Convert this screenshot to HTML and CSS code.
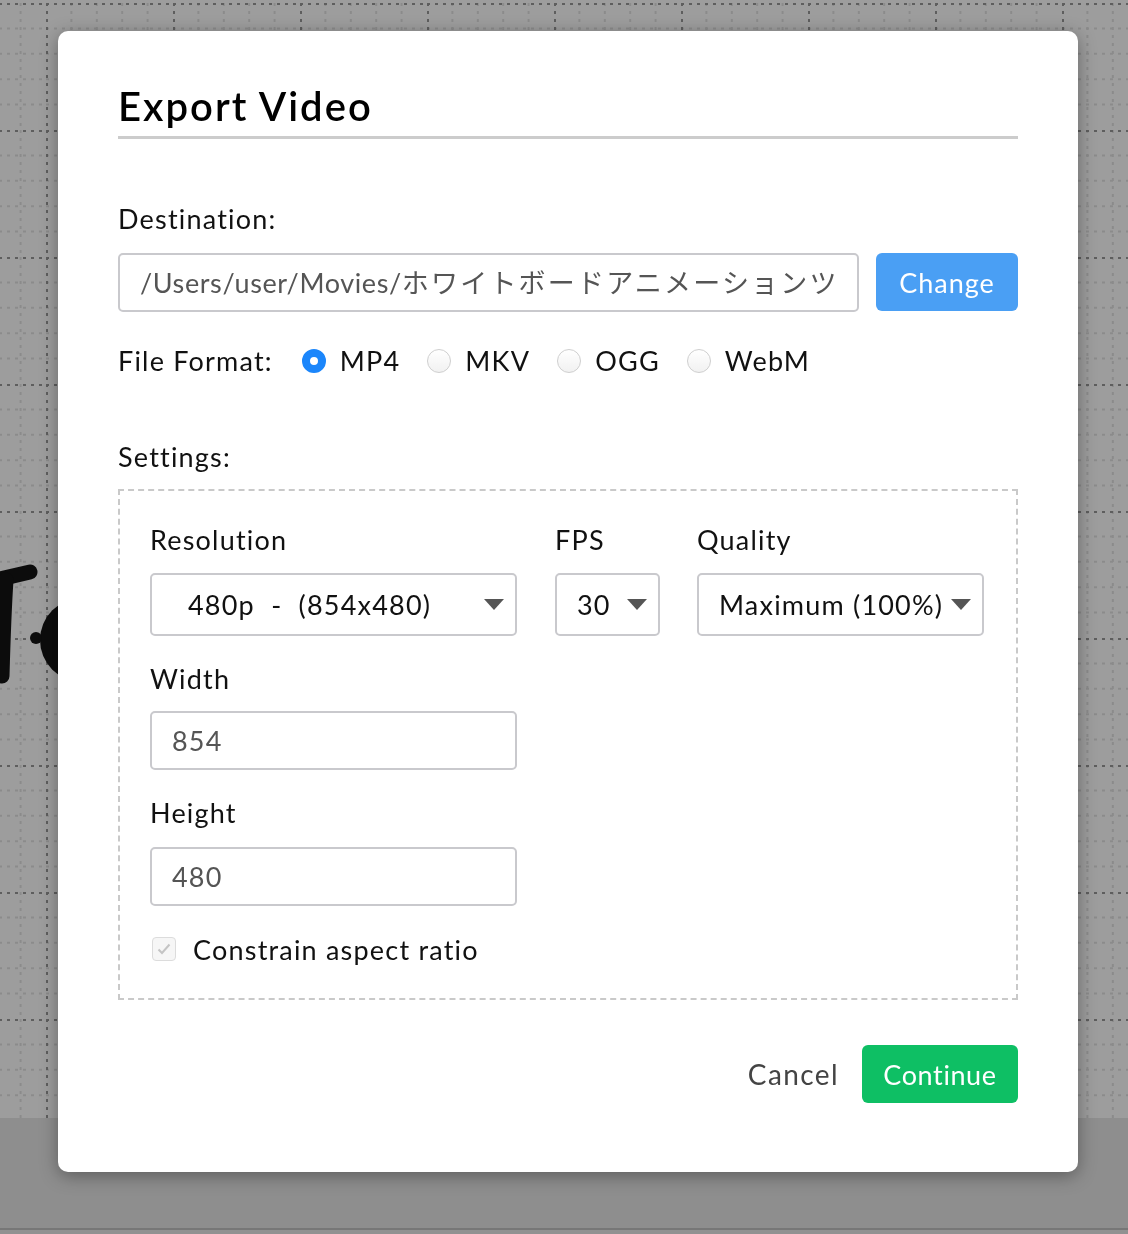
FILE: index.html
```html
<!DOCTYPE html>
<html>
<head>
<meta charset="utf-8">
<link rel="stylesheet" href="styles.css">
</head>
<body>
<div class="canvas">
  <svg class="grid" width="1128" height="1118" viewBox="0 0 1128 1118">
    <defs>
      <pattern id="g" width="127" height="127" patternUnits="userSpaceOnUse" x="46" y="3">
        <g stroke="#8b8b8b" stroke-width="2" stroke-dasharray="3 5">
          <line x1="25.4" y1="0" x2="25.4" y2="127"/>
          <line x1="50.8" y1="0" x2="50.8" y2="127"/>
          <line x1="76.2" y1="0" x2="76.2" y2="127"/>
          <line x1="101.6" y1="0" x2="101.6" y2="127"/>
          <line y1="25.4" x1="0" y2="25.4" x2="127"/>
          <line y1="50.8" x1="0" y2="50.8" x2="127"/>
          <line y1="76.2" x1="0" y2="76.2" x2="127"/>
          <line y1="101.6" x1="0" y2="101.6" x2="127"/>
        </g>
        <g stroke="#5e5e5e" stroke-width="2" stroke-dasharray="3 5">
          <line x1="1" y1="0" x2="1" y2="127"/>
          <line y1="1" x1="0" y2="1" x2="127"/>
        </g>
      </pattern>
    </defs>
    <rect width="1128" height="1118" fill="url(#g)"/>
    <g fill="none" stroke="#0c0c0c" stroke-linecap="round" stroke-width="15">
      <path d="M-4 580 L30 572"/>
      <path d="M6 580 C4 610 3 640 2 676"/>
    </g>
    <circle cx="82" cy="640" r="42" fill="#0c0c0c"/>
    <circle cx="36" cy="638" r="6" fill="#0c0c0c"/>
  </svg>
</div>
<div class="bottombar"></div>

<div class="modal">
  <h1 class="title">Export Video</h1>

  <div class="label dest-label">Destination:</div>
  <div class="dest-row">
    <div class="field path"><span class="path-text">/Users/user/Movies/<span class="jp">ホワイトボードアニメーションツール</span></span></div>
    <button class="btn btn-blue">Change</button>
  </div>

  <div class="format-row">
    <span class="label">File Format:</span>
    <label class="radio checked"><span class="dot"></span>MP4</label>
    <label class="radio"><span class="dot"></span>MKV</label>
    <label class="radio"><span class="dot"></span>OGG</label>
    <label class="radio"><span class="dot"></span>WebM</label>
  </div>

  <div class="label settings-label">Settings:</div>
  <div class="settings">
    <div class="cols">
      <div class="col col-res">
        <div class="label">Resolution</div>
        <div class="select res-select"><span class="val">480p&nbsp; - &nbsp;(854x480)</span><span class="caret"></span></div>
      </div>
      <div class="col col-fps">
        <div class="label">FPS</div>
        <div class="select"><span class="val">30</span><span class="caret"></span></div>
      </div>
      <div class="col col-q">
        <div class="label">Quality</div>
        <div class="select"><span class="val">Maximum (100%)</span><span class="caret"></span></div>
      </div>
    </div>

    <div class="label sub-label">Width</div>
    <div class="field num w-field">854</div>
    <div class="label sub-label">Height</div>
    <div class="field num h-field">480</div>

    <label class="check">
      <span class="box">
        <svg width="14" height="12" viewBox="0 0 14 12"><path d="M1.5 6.5 L5 10 L12.5 1.5" fill="none" stroke="#c4c4c4" stroke-width="2"/></svg>
      </span>
      Constrain aspect ratio
    </label>
  </div>

  <div class="actions">
    <button class="btn-text">Cancel</button>
    <button class="btn btn-green">Continue</button>
  </div>
</div>
</body>
</html>
```

FILE: styles.css
```css
html, body {
  margin: 0;
  padding: 0;
}
body {
  width: 1128px;
  height: 1234px;
  overflow: hidden;
  background: #919191;
  font-family: Lato, "Noto Sans CJK JP", sans-serif;
  color: #111;
  letter-spacing: 1.2px;
}
.canvas {
  height: 1118px;
  background: #9d9d9d;
  overflow: hidden;
}
.grid {
  display: block;
}
.bottombar {
  height: 110px;
  background: #8e8e8e;
  border-bottom: 2px solid #777;
}

.modal {
  position: fixed;
  left: 58px;
  top: 31px;
  width: 1020px;
  height: 1141px;
  box-sizing: border-box;
  padding: 51px 60px 0;
  background: #fff;
  border-radius: 10px;
  box-shadow: 0 4px 18px rgba(0, 0, 0, 0.35);
  display: flex;
  flex-direction: column;
  align-items: stretch;
}

.title {
  margin: 0;
  font-size: 40px;
  line-height: 48px;
  font-weight: 600;
  color: #000;
  padding-bottom: 6px;
  border-bottom: 3px solid #cccccc;
  letter-spacing: 2px;
}

.label {
  font-size: 27px;
  line-height: 32px;
  color: #111;
}
.dest-label { margin-top: 64px; }

.dest-row {
  margin-top: 18px;
  display: flex;
  gap: 17px;
  height: 59px;
}
.field {
  box-sizing: border-box;
  border: 2px solid #c9c9cd;
  border-radius: 5px;
  font-size: 27px;
  color: #555;
  display: flex;
  align-items: center;
  white-space: nowrap;
  overflow: hidden;
}
.path {
  width: 741px;
  padding: 0 20px;
  letter-spacing: 0.6px;
}
.path-text {
  display: block;
  width: 100%;
  overflow: hidden;
  white-space: nowrap;
  line-height: 55px;
}
.jp {
  letter-spacing: 2.2px;
}
.btn {
  border: none;
  border-radius: 6px;
  color: #fff;
  font-family: Lato, sans-serif;
  font-size: 27px;
  letter-spacing: 1px;
  cursor: pointer;
  padding: 0;
}
.btn-blue {
  width: 142px;
  height: 58px;
  background: #4a9ff4;
}

.format-row {
  margin-top: 33px;
  height: 32px;
  display: flex;
  align-items: center;
}
.format-row .label { margin-right: 29px; }
.radio {
  display: flex;
  align-items: center;
  font-size: 27px;
  line-height: 32px;
  margin-right: 27px;
}
.radio .dot {
  box-sizing: border-box;
  width: 24px;
  height: 24px;
  border-radius: 50%;
  border: 1px solid #cfcfcf;
  background: linear-gradient(#ffffff, #f1f1f1);
  margin-right: 14px;
}
.radio.checked .dot {
  border: 8px solid #1b86fb;
  background: #fff;
}

.settings-label { margin-top: 64px; }

.settings {
  margin-top: 16px;
  height: 511px;
  box-sizing: border-box;
  border: 2px dashed #c9c9c9;
  padding: 33px 31px 33px 30px;
}
.cols {
  display: flex;
  gap: 38px;
}
.col {
  display: flex;
  flex-direction: column;
  gap: 17px;
}
.col-res { width: 367px; }
.col-fps { width: 105px; }
.col-q { width: 287px; margin-left: -1px; }
.select {
  box-sizing: border-box;
  height: 63px;
  border: 2px solid #c9c9cd;
  border-radius: 5px;
  display: flex;
  align-items: center;
  justify-content: space-between;
  padding: 0 11px 0 20px;
  font-size: 27px;
  color: #111;
  white-space: nowrap;
}
.res-select { padding-left: 36px; }
.caret {
  flex: none;
  width: 0;
  height: 0;
  border-left: 10px solid transparent;
  border-right: 10px solid transparent;
  border-top: 11px solid #555;
}

.sub-label { margin-top: 27px; }
.num {
  width: 367px;
  height: 59px;
  padding: 0 20px;
}
.w-field { margin-top: 16px; }
.h-field { margin-top: 18px; }

.check {
  margin-top: 27px;
  height: 32px;
  display: flex;
  align-items: center;
  font-size: 27px;
  color: #111;
}
.check .box {
  box-sizing: border-box;
  width: 24px;
  height: 24px;
  border: 1px solid #dcdcdc;
  border-radius: 4px;
  background: #f6f6f6;
  display: flex;
  align-items: center;
  justify-content: center;
  margin: 0 17px 0 2px;
}

.actions {
  margin-top: 45px;
  display: flex;
  justify-content: flex-end;
  align-items: center;
  gap: 23px;
}
.btn-text {
  border: none;
  background: none;
  padding: 0;
  font-family: Lato, sans-serif;
  font-size: 28px;
  letter-spacing: 1.4px;
  color: #444;
}
.btn-green {
  width: 156px;
  height: 58px;
  background: #0ebf64;
  letter-spacing: 0.6px;
}
```
